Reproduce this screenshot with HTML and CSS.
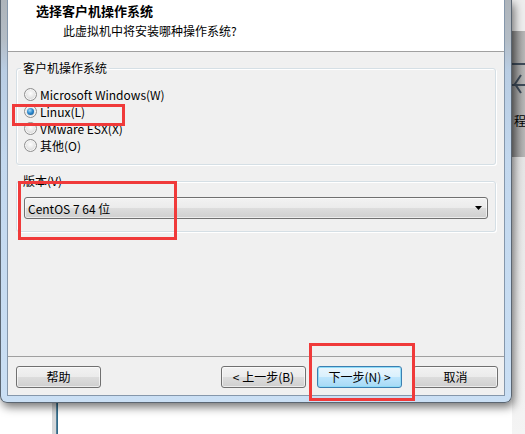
FILE: index.html
```html
<!DOCTYPE html>
<html lang="zh-CN">
<head>
    <meta charset="UTF-8">
    <meta name="viewport" content="width=device-width, initial-scale=1.0">
    <title>新建虚拟机向导</title>
    <link rel="stylesheet" href="styles.css">
</head>
<body>
    <div class="desk">
        <div class="main-col">
            <div class="window">
                <div class="client">
                    <div class="wizard-head">
                        <h1>选择客户机操作系统</h1>
                        <p>此虚拟机中将安装哪种操作系统?</p>
                    </div>

                    <div class="wizard-body">
                        <fieldset class="group group-os">
                            <legend>客户机操作系统</legend>
                            <div class="option"><span class="radio"></span>Microsoft Windows(W)</div>
                            <div class="option"><span class="radio checked"></span>Linux(L)</div>
                            <div class="option"><span class="radio"></span>VMware ESX(X)</div>
                            <div class="option"><span class="radio"></span>其他(O)</div>
                        </fieldset>

                        <fieldset class="group group-version">
                            <legend>版本(V)</legend>
                            <div class="combo">
                                <span>CentOS 7 64 位</span>
                                <svg class="combo-arrow" width="7" height="4" viewBox="0 0 7 4">
                                    <path d="M0 0 H7 L3.5 4 Z" fill="#000"/>
                                </svg>
                            </div>
                        </fieldset>
                    </div>

                    <div class="wizard-foot">
                        <button class="btn">帮助</button>
                        <span class="spacer"></span>
                        <button class="btn">&lt; 上一步(B)</button>
                        <button class="btn btn-default">下一步(N) &gt;</button>
                        <button class="btn">取消</button>
                    </div>
                </div>
            </div>
            <div class="below">
                <div class="tree-line"></div>
            </div>
        </div>

        <!-- strip of the window behind the dialog -->
        <div class="side">
            <div class="side-top"></div>
            <div class="side-mid">
                <svg width="13" height="82" viewBox="0 0 13 82">
                    <path d="M0 33 H13 M0 54 H13" stroke="#3d4a58" stroke-width="2"/>
                    <path d="M9 44 L3 53 L9 62" stroke="#3d4a58" stroke-width="2" fill="none"/>
                </svg>
                <span class="side-text">程</span>
            </div>
            <div class="side-bot"></div>
        </div>
    </div>

    <!-- red annotation boxes -->
    <div class="mark mark-linux"></div>
    <div class="mark mark-version"></div>
    <div class="mark mark-next"></div>
</body>
</html>
```

FILE: styles.css
```css
* {
    box-sizing: border-box;
}

html, body {
    margin: 0;
}

body {
    position: relative;
    width: 525px;
    height: 434px;
    overflow: hidden;
    background: #fff;
    font-family: "Noto Sans CJK SC", "Microsoft YaHei", sans-serif;
    font-size: 12px;
    color: #000;
}

.desk {
    display: flex;
    height: 434px;
}

.main-col {
    display: flex;
    flex-direction: column;
    width: 512px;
}

/* dialog frame */
.window {
    position: relative;
    z-index: 1;
    height: 403px;
    padding: 0 6px 6px;
    border: 1px solid #5b6672;
    border-top: 0;
    border-radius: 0 0 7px 7px;
    background: linear-gradient(to bottom, #aeb4ba 0, #b4bdc6 40px, #b9cde3 70px, #c3d8ee 160px, #cadff4 100%);
    box-shadow: 2px 4px 10px rgba(0,0,0,0.55);
}

.client {
    display: flex;
    flex-direction: column;
    height: 396px;
    border: 1px solid #8597ab;
    border-top: 0;
    background-color: #f0f0f0;
}

.wizard-head {
    height: 52px;
    background-color: #fff;
    border-bottom: 1px solid #a0a0a0;
}

.wizard-head h1 {
    margin: 0;
    padding: 3px 0 0 28px;
    font-size: 13px;
    line-height: 16px;
    font-weight: bold;
}

.wizard-head p {
    margin: 4px 0 0 55px;
    line-height: 16px;
}

.wizard-body {
    flex: 1;
    padding: 8px 8px 0;
}

.group {
    min-width: 0;
    margin: 0;
    padding: 10px 7px 10px 4px;
    border: 1px solid #d5dfe5;
    border-radius: 3px;
    box-shadow: 1px 1px 0 #fff, inset 1px 1px 0 #fff;
}

.group legend {
    padding: 0 2px;
    line-height: 16px;
}

.group-version {
    margin-top: 8px;
    padding-top: 8px;
    padding-bottom: 12px;
}

.option {
    display: flex;
    align-items: center;
    height: 17px;
    margin-left: 3px;
    line-height: 17px;
}

.radio {
    position: relative;
    flex: none;
    width: 13px;
    height: 13px;
    margin-right: 3px;
    border: 1px solid #8f8f8f;
    border-radius: 50%;
    background: radial-gradient(circle at 50% 40%, #fdfdfd 0, #e8e8e8 45%, #c6c6c6 100%);
    box-shadow: inset 0 0 0 1px #f6f6f6;
}

.radio.checked::after {
    content: "";
    position: absolute;
    left: 2px;
    top: 2px;
    width: 7px;
    height: 7px;
    border-radius: 50%;
    background: radial-gradient(circle at 40% 35%, #a8dcf8 0, #2f8bd0 45%, #0c4c85 100%);
}

.combo {
    display: flex;
    align-items: center;
    justify-content: space-between;
    width: 464px;
    height: 22px;
    margin-left: 3px;
    padding: 0 5px 0 3px;
    border: 1px solid #707070;
    border-radius: 3px;
    background: linear-gradient(to bottom, #f2f2f2 0, #ebebeb 50%, #dddddd 50%, #cfcfcf 100%);
    box-shadow: inset 0 0 0 1px rgba(255,255,255,0.6);
}

.combo-arrow {
    display: block;
}

.wizard-foot {
    display: flex;
    height: 39px;
    padding: 9px 6px 0 8px;
    border-top: 1px solid #a0a0a0;
}

.spacer {
    flex: 1;
}

.btn {
    width: 85px;
    height: 22px;
    margin-left: 11px;
    padding: 0;
    border: 1px solid #707070;
    border-radius: 3px;
    background: linear-gradient(to bottom, #f2f2f2 0, #ebebeb 50%, #dddddd 50%, #cfcfcf 100%);
    box-shadow: inset 0 0 0 1px rgba(255,255,255,0.6);
    font: inherit;
    line-height: 20px;
    color: #000;
}

.btn:first-child {
    margin-left: 0;
}

.btn-default {
    border-color: #3c7fb1;
    background: linear-gradient(to bottom, #eaf6fd 0, #d9f0fc 50%, #bee6fd 50%, #a7d9f5 100%);
    box-shadow: inset 0 0 0 1px #8fdcf8;
}

/* desktop below and beside the dialog */
.below {
    flex: 1;
}

.tree-line {
    width: 6px;
    height: 100%;
    margin-left: 52px;
    background: linear-gradient(to right, #d6d8da 0, #d6d8da 4px, #7d97a8 4px, #2f6a8a 5px, #2f6a8a 6px);
}

.side {
    display: flex;
    flex-direction: column;
    width: 13px;
    overflow: hidden;
}

.side-top {
    height: 31px;
    background: #eeeeee;
}

.side-mid {
    height: 126px;
    background: linear-gradient(to right, #8c8c8c, #b8b8b8);
}

.side-mid svg {
    display: block;
}

.side-text {
    display: block;
    margin-left: 2px;
    line-height: 16px;
    white-space: nowrap;
}

.side-bot {
    flex: 1;
    background: linear-gradient(to bottom, #e6e6e6, #f4f4f4);
}

/* annotations */
.mark {
    position: absolute;
    z-index: 2;
    border: 3px solid #f03a3a;
}

.mark-linux {
    left: 12px;
    top: 104px;
    width: 113px;
    height: 22px;
}

.mark-version {
    left: 18px;
    top: 181px;
    width: 159px;
    height: 59px;
}

.mark-next {
    left: 309px;
    top: 343px;
    width: 106px;
    height: 58px;
}
```
